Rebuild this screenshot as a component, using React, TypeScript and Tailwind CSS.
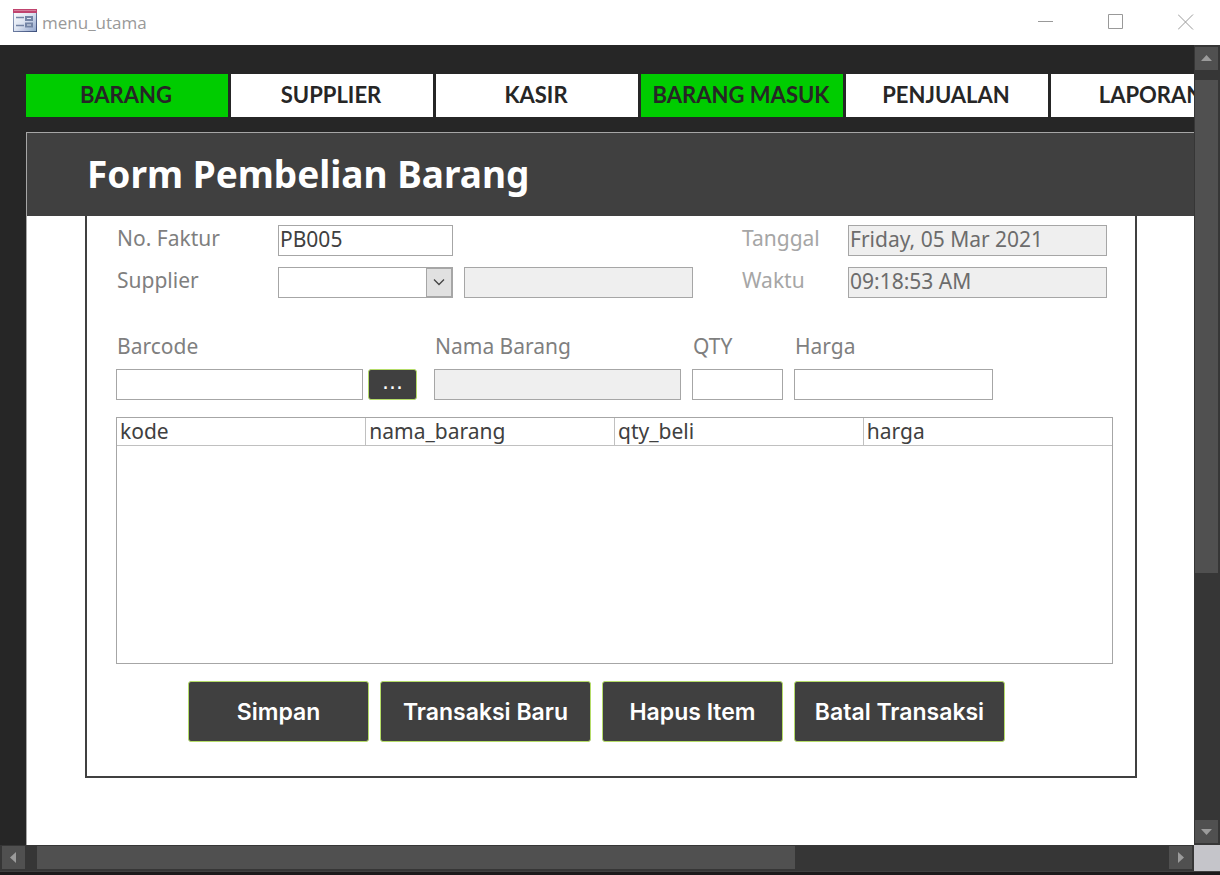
import React, { useId } from "react";

const LABEL = "pl-px font-['Noto_Sans',sans-serif] text-[21px] leading-[26px]";
const FIELD =
  "block h-[31px] w-full min-w-0 border border-[#a6a6a6] px-px pb-[3px] font-['Noto_Sans',sans-serif] text-[21px] leading-[26px] outline-none";

const tabs = [
  { name: "BARANG", active: true },
  { name: "SUPPLIER", active: false },
  { name: "KASIR", active: false },
  { name: "BARANG MASUK", active: true },
  { name: "PENJUALAN", active: false },
  { name: "LAPORAN", active: false },
];

const columns = ["kode", "nama_barang", "qty_beli", "harga"];

function FormIcon() {
  return (
    <svg width="24" height="23" viewBox="0 0 24 23" aria-hidden="true">
      <defs>
        <linearGradient id="sheet" x1="0" y1="0" x2="1" y2="1">
          <stop offset="0" stopColor="#ffffff" />
          <stop offset="0.5" stopColor="#dde4f1" />
          <stop offset="1" stopColor="#8fa3cb" />
        </linearGradient>
        <linearGradient id="frame" x1="0" y1="0" x2="1" y2="1">
          <stop offset="0" stopColor="#9aa8c4" />
          <stop offset="1" stopColor="#3d4f7c" />
        </linearGradient>
      </defs>
      <rect x="0.5" y="0.5" width="23" height="22" fill="url(#sheet)" stroke="url(#frame)" />
      <rect x="0" y="0" width="24" height="4" fill="#c0446f" />
      <rect x="1" y="1" width="22" height="1" fill="#d4809c" />
      <path d="M3 8.5h8M3 16.500h8" stroke="#7384a5" strokeWidth="1.6" />
      <rect x="13" y="8" width="6" height="3" fill="#dfe6f2" stroke="#7384a5" strokeWidth="2" />
      <rect x="13" y="14.5" width="6" height="3" fill="#dfe6f2" stroke="#7384a5" strokeWidth="2" />
    </svg>
  );
}

function Field({ label, className, muted, value = "", disabled = false }: {
  label: string; className: string; muted?: boolean; value?: string; disabled?: boolean;
}) {
  const id = useId();
  return (
    <div className={className}>
      <label htmlFor={id} className={`${LABEL} ${muted ? "text-[#a6a6a6]" : "text-[#7f7f7f]"}`}>{label}</label>
      <input
        id={id}
        defaultValue={value}
        disabled={disabled}
        className={`${FIELD} ${disabled ? "bg-[#efefef] text-[#6c6c6c]" : "bg-white text-[#404040]"}`}
      />
    </div>
  );
}

function ActionButton({ children, className }: { children: React.ReactNode; className: string }) {
  return (
    <button type="button" className={`rounded-[3px] border border-[#b5dc68] bg-[#404040] text-white ${className}`}>
      {children}
    </button>
  );
}

function Arrow({ d, label }: { d: string; label: string }) {
  return (
    <button type="button" aria-label={label} className="flex size-[23px] shrink-0 items-center justify-center bg-[#505050]">
      <svg width="11" height="11" viewBox="0 0 11 11"><path d={d} fill="#9b9b9b" /></svg>
    </button>
  );
}

export default function App() {
  return (
    <div className="flex h-screen flex-col overflow-hidden bg-[#262626]">
      <header className="flex h-[45px] shrink-0 items-center bg-white pl-[13px]">
        <div className="flex flex-1 items-center gap-[5px] pb-1">
          <FormIcon />
          <span className="pt-1 font-['Open_Sans',sans-serif] text-[17px] leading-6 text-[#999999]">menu_utama</span>
        </div>
        <div className="flex h-full items-center gap-[54px] pr-[26px] pb-[2px]">
          <button type="button" aria-label="Minimize">
            <svg width="16" height="16" viewBox="0 0 16 16"><path d="M0 7.500h15" stroke="#999" /></svg>
          </button>
          <button type="button" aria-label="Maximize">
            <svg width="16" height="16" viewBox="0 0 16 16"><path d="M.5.5h14v14H.5z" stroke="#999" fill="none" /></svg>
          </button>
          <button type="button" aria-label="Close">
            <svg width="16" height="16" viewBox="0 0 16 16"><path d="M0 .5l15 15M15 .5l-15 15" stroke="#999" /></svg>
          </button>
        </div>
      </header>

      <div className="flex min-h-0 flex-1">
        <main className="flex min-w-0 flex-1 flex-col overflow-hidden pt-[29px] pl-[26px]">
          <nav className="flex shrink-0 gap-[3px]">
            {tabs.map((tab) => (
              <button
                key={tab.name}
                type="button"
                className={`h-[43px] w-[202px] shrink-0 pr-[2px] pb-[2px] font-['Lato',sans-serif] text-[22px] leading-7 font-bold whitespace-nowrap text-[#262626] ${tab.active ? "bg-[#00cc00]" : "bg-white"}`}
              >
                {tab.name}
              </button>
            ))}
          </nav>

          <section className="mt-[15px] flex-1 border-t border-l border-[#a6a6a6] bg-white">
            <div className="flex h-[83px] items-center bg-[#404040] pb-[2px] pl-[60px]">
              <h1 className="font-['Noto_Sans',sans-serif] text-[37px] leading-[52px] font-bold whitespace-nowrap text-white">Form Pembelian Barang</h1>
            </div>

            <form className="mr-[57px] ml-[58px] border-2 border-t-0 border-[#404040] pt-[9px] pr-[22px] pb-[34px] pl-[29px]">
              <div className="flex justify-between pr-[6px]">
                <div className="flex flex-col gap-[11px]">
                  <Field label="No. Faktur" value="PB005" className="grid grid-cols-[162px_175px]" />
                  <div className="grid grid-cols-[162px_175px_229px]">
                    <label htmlFor="supplier" className={`${LABEL} text-[#7f7f7f]`}>Supplier</label>
                    <div className="relative">
                      <select id="supplier" className={`${FIELD} appearance-none bg-white text-[#404040]`}>
                        <option></option>
                      </select>
                      <span className="pointer-events-none absolute inset-y-px right-px flex w-[26px] items-center justify-center border border-[#a6a6a6] bg-[#e1e1e1] pr-px pb-px">
                        <svg width="12" height="8" viewBox="0 0 12 8"><path d="M1 1.5l5 5 5-5" fill="none" stroke="#444" strokeWidth="1.3" /></svg>
                      </span>
                    </div>
                    <input aria-label="Nama supplier" disabled className={`${FIELD} ml-[11px] bg-[#efefef]`} />
                  </div>
                </div>
                <div className="flex flex-col gap-[11px]">
                  <Field label="Tanggal" value="Friday, 05 Mar 2021" muted disabled className="grid grid-cols-[107px_259px]" />
                  <Field label="Waktu" value="09:18:53 AM" muted disabled className="grid grid-cols-[107px_259px]" />
                </div>
              </div>

              <div className="mt-[35px] flex items-end">
                <Field label="Barcode" className="flex w-[247px] flex-col gap-[10px]" />
                <ActionButton className="mr-[17px] ml-[5px] h-[31px] w-[49px] pb-[5px] font-['DejaVu_Sans',sans-serif] text-[22px] leading-6">...</ActionButton>
                <Field label="Nama Barang" disabled className="flex w-[247px] flex-col gap-[10px]" />
                <Field label="QTY" className="ml-[11px] flex w-[91px] flex-col gap-[10px]" />
                <Field label="Harga" className="ml-[11px] flex w-[199px] flex-col gap-[10px]" />
              </div>

              <div className="mt-[17px] h-[247px] border border-[#a6a6a6]">
                <table className="w-full table-fixed border-collapse">
                  <thead>
                    <tr className="border-b border-[#c0c0c0]">
                      {columns.map((name) => (
                        <th
                          key={name}
                          className="border-r border-[#c0c0c0] p-0 pb-px pl-[3px] text-left font-['Noto_Sans',sans-serif] text-[21px] leading-[26px] font-normal text-[#404040] last:border-r-0"
                        >
                          {name}
                        </th>
                      ))}
                    </tr>
                  </thead>
                </table>
              </div>

              <div className="mt-[17px] ml-[72px] flex gap-[11px] font-['Inter',sans-serif] text-[23px] leading-8 font-semibold whitespace-nowrap">
                <ActionButton className="h-[61px] w-[181px]">Simpan</ActionButton>
                <ActionButton className="h-[61px] w-[211px]">Transaksi Baru</ActionButton>
                <ActionButton className="h-[61px] w-[181px]">Hapus Item</ActionButton>
                <ActionButton className="h-[61px] w-[211px]">Batal Transaksi</ActionButton>
              </div>
            </form>
          </section>
        </main>

        <div className="flex w-[26px] shrink-0 flex-col bg-[#363636] pt-[2px] pr-[2px] pb-[2px] pl-px">
          <Arrow label="Scroll up" d="M0 8h11L5.500 2z" />
          <div className="mt-[10px] flex min-h-0 flex-1 flex-col">
            <div className="flex-[2] bg-[#505050]" />
            <div className="flex-[1]" />
          </div>
          <Arrow label="Scroll down" d="M0 3h11L5.500 9z" />
        </div>
      </div>

      <div className="flex h-[26px] shrink-0">
        <div className="flex min-w-0 flex-1 items-start bg-[#363636] pt-px pr-[2px] pl-[2px]">
          <Arrow label="Scroll left" d="M8 0v11L2 5.500z" />
          <div className="ml-[12px] h-[23px] min-w-0 flex-1">
            <div className="h-full w-[67%] bg-[#505050]" />
          </div>
          <Arrow label="Scroll right" d="M3 0v11L9 5.500z" />
        </div>
        <div className="w-[26px] bg-[#c5c5ca]" />
      </div>
      <div className="h-[4px] shrink-0 border-t border-[#404040] bg-[#1c1a1b]" />
    </div>
  );
}
